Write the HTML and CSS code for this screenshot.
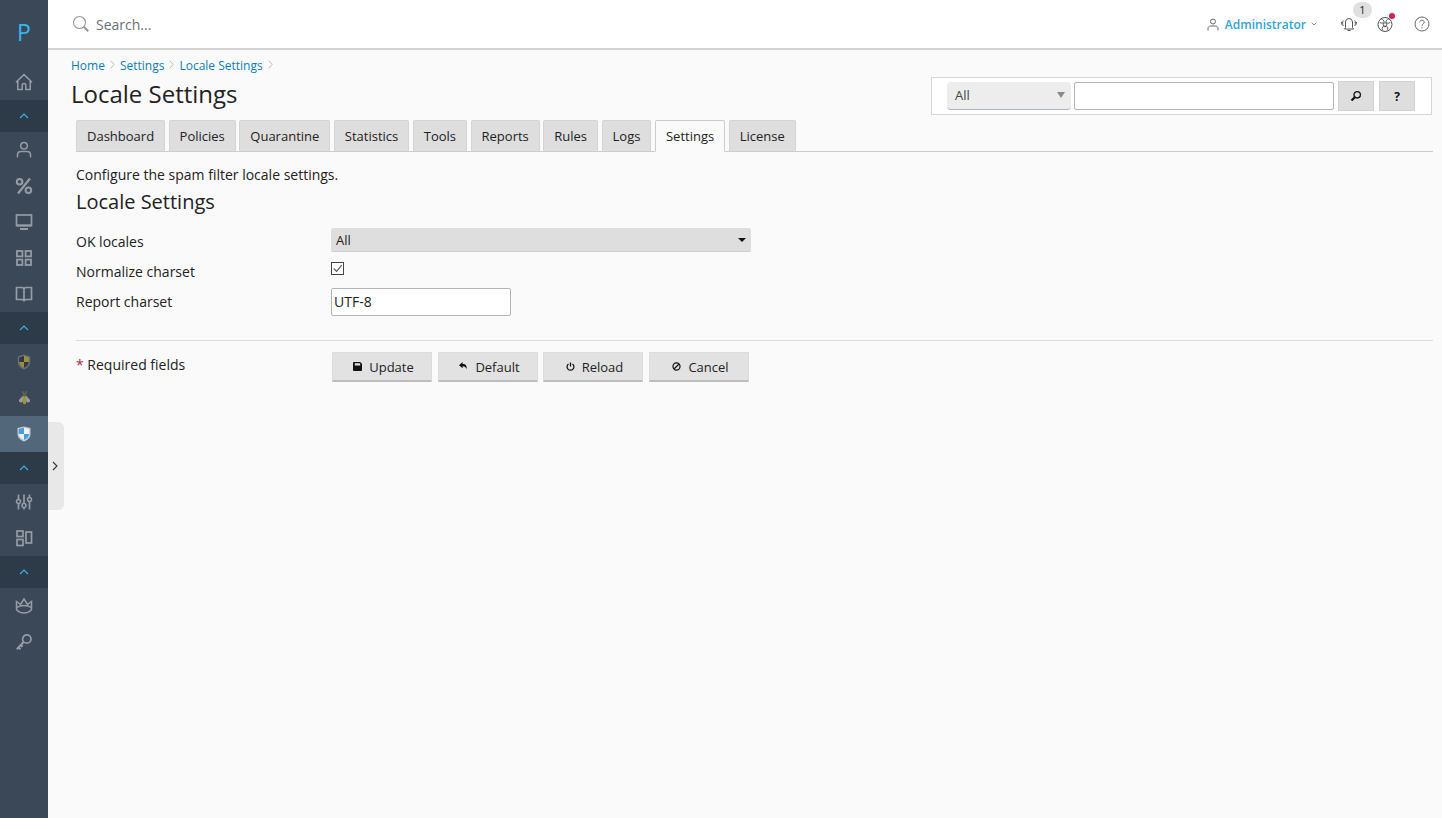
FILE: index.html
```html
<!DOCTYPE html>
<html lang="en">
<head>
<meta charset="utf-8">
<title>Locale Settings</title>
<link rel="stylesheet" href="styles.css">
</head>
<body>
<div class="app">
  <nav class="sidebar">
    <div class="logo">P</div>
    <div class="nav-item"><svg class="ico" viewBox="0 0 18 18"><path d="M1 9.200 9 1.600l8 7.600M2.800 8v8.600h4.400v-4.400a1.800 1.800 0 0 1 3.600 0v4.400h4.400V8"/></svg></div>
    <div class="band"><svg class="chev" viewBox="0 0 10 6"><path d="M1 5l4-4 4 4"/></svg></div>
    <div class="nav-item"><svg class="ico" viewBox="0 0 18 18"><circle cx="9" cy="4.800" r="3.300"/><path d="M2.500 16.500v-2.600c0-2 1.400-3.400 3.400-3.400h6.200c2 0 3.400 1.400 3.400 3.400v2.600"/></svg></div>
    <div class="nav-item"><svg class="ico" viewBox="0 0 18 18"><circle cx="4.600" cy="4.800" r="2.800" stroke-width="2"/><circle cx="13.400" cy="13.200" r="2.800" stroke-width="2"/><path d="M15 1.500 3 16.500" stroke-width="2.200"/></svg></div>
    <div class="nav-item"><svg class="ico" viewBox="0 0 18 18"><rect x="1.500" y="2" width="15" height="10.500" stroke-width="1.700"/><path d="M5 16h8" stroke-width="2"/><path d="M1.500 12.500h15" stroke-width="2"/></svg></div>
    <div class="nav-item"><svg class="ico" viewBox="0 0 18 18"><rect x="2" y="2" width="5.400" height="5.400" stroke-width="1.800"/><rect x="10.600" y="2" width="5.400" height="5.400" stroke-width="1.800"/><rect x="2" y="10.600" width="5.400" height="5.400" stroke-width="1.800"/><rect x="10.600" y="10.600" width="5.400" height="5.400" stroke-width="1.800"/></svg></div>
    <div class="nav-item"><svg class="ico" viewBox="0 0 18 18"><path d="M1.500 2.500h6L9 3.600l1.500-1.100h6v12h-6L9 15.600l-1.500-1.100h-6zM9 3.600v12" stroke-width="1.700"/></svg></div>
    <div class="band"><svg class="chev" viewBox="0 0 10 6"><path d="M1 5l4-4 4 4"/></svg></div>
    <div class="nav-item"><svg class="pic" viewBox="0 0 14 16"><path d="M7 .500l6.200 2V8c0 3.500-2.600 6-6.200 7.500C3.400 14 .800 11.500.800 8V2.500z" fill="#667079"/><path d="M7 2 2.200 3.500V8H7z" fill="#34383d"/><path d="M7 2l4.800 1.500V8H7z" fill="#9c9039"/><path d="M7 8H2.200c.3 2.600 2.200 4.500 4.800 5.800z" fill="#9c9039"/><path d="M7 8h4.800c-.3 2.600-2.200 4.500-4.800 5.800z" fill="#34383d"/></svg></div>
    <div class="nav-item"><svg class="pic bee" viewBox="0 0 13 14"><path d="M5.500 4 1 9c-.6 2 1.800 3 3.300 2L6 7z" fill="#97a0aa"/><path d="M7.500 4 12 9c.6 2-1.800 3-3.300 2L7 7z" fill="#97a0aa"/><ellipse cx="6.500" cy="9" rx="2" ry="4.200" fill="#9c9340"/><circle cx="6.500" cy="3.800" r="1.700" fill="#5f6440"/><path d="M5.500 2.500 4.500.3M7.500 2.500 8.500.3" stroke="#8d8a4e" stroke-width=".8"/></svg></div>
    <div class="nav-item active"><svg class="pic" viewBox="0 0 14 16"><path d="M7 .500l6.500 1.500V8c0 3.500-2.800 6-6.500 7.500C3.300 14 .500 11.500.500 8V2z" fill="#c3c9cf"/><path d="M7 1.800 1.800 3v5H7z" fill="#3f9fe0"/><path d="M7 1.800l5.200 1.200v5H7z" fill="#eef2f5"/><path d="M7 8H1.800c.3 2.600 2.400 4.500 5.200 5.800z" fill="#eef2f5"/><path d="M7 8h5.200c-.3 2.600-2.400 4.500-5.200 5.800z" fill="#3f9fe0"/></svg></div>
    <div class="band"><svg class="chev" viewBox="0 0 10 6"><path d="M1 5l4-4 4 4"/></svg></div>
    <div class="nav-item"><svg class="ico" viewBox="0 0 18 18"><path d="M3.500 1.500v5M3.500 10.500v6M9 1.500v9M9 14.500v2M14.500 1.500v3M14.500 8.500v8" stroke-width="1.700"/><circle cx="3.500" cy="8.500" r="2"/><circle cx="9" cy="12.500" r="2"/><circle cx="14.500" cy="6.500" r="2"/></svg></div>
    <div class="nav-item"><svg class="ico" viewBox="0 0 18 18"><rect x="2" y="2" width="6" height="5.500" stroke-width="1.700"/><rect x="2" y="10.500" width="6" height="6" stroke-width="1.700"/><rect x="11" y="3" width="5.500" height="11" stroke-width="1.700"/></svg></div>
    <div class="band"><svg class="chev" viewBox="0 0 10 6"><path d="M1 5l4-4 4 4"/></svg></div>
    <div class="nav-item"><svg class="ico" viewBox="0 0 18 18"><path d="M1.500 4.500 5.500 7.500 9 2l3.500 5.500 4-3V12.500c-1.500 2-4.300 3.500-7.500 3.500s-6-1.500-7.500-3.500z"/><path d="M1.800 10.500c1.700-1.200 4.200-2 7.200-2s5.500.8 7.200 2"/></svg></div>
    <div class="nav-item"><svg class="ico" viewBox="0 0 18 18"><circle cx="11.800" cy="6" r="4.200" stroke-width="1.700"/><path d="M8.600 9 1.800 16.200M3.500 14.400l2 2M5.800 12l1.800 1.800" stroke-width="2"/></svg></div>
  </nav>
  <div class="collapse-tab"><svg viewBox="0 0 6 10"><path d="M1 1l4 4-4 4"/></svg></div>
  <div class="main">
    <header class="topbar">
      <svg class="search-ico" viewBox="0 0 18 18"><circle cx="7.500" cy="7.500" r="6"/><path d="M11.800 11.800l4.500 4.500" stroke-width="2"/></svg>
      <span class="search-text">Search...</span>
      <div class="top-right">
        <div class="user">
          <svg class="user-ico" viewBox="0 0 12 13"><circle cx="6" cy="3.500" r="2.500"/><path d="M1 12.500v-2c0-1.500 1-2.500 2.500-2.500h5C10 8 11 9 11 10.500v2"/></svg>
          <span class="user-name">Administrator</span>
          <svg class="user-caret" viewBox="0 0 6 4"><path d="M.7.700 3 3 5.300.700"/></svg>
        </div>
        <div class="bell">
          <svg class="bell-ico" viewBox="0 0 16 14"><path d="M4.500 10.500V5a3.500 3.500 0 0 1 7 0v5.500l1 1.500h-9zM6.500 13.500h3"/><path d="M2.200 3.500C1.400 5 1.400 7.500 2.200 9M13.800 3.500c.8 1.500.8 4 0 5.500M.6 5c-.3.800-.3 1.700 0 2.500M15.400 5c.3.800.3 1.700 0 2.500"/></svg>
          <span class="count">1</span>
        </div>
        <div class="lifering">
          <svg class="ring-ico" viewBox="0 0 16 16"><circle cx="8" cy="8.500" r="7"/><circle cx="8" cy="8.500" r="1.800"/><path d="M3.500 3.200c1.500-.6 2.500.2 3.500 2 .2.800-.5 1.300-1.200 1.800-1.400.5-2.500 0-3-1M12.500 3.200c-1.500-.6-2.500.2-3.500 2-.2.800.5 1.300 1.200 1.800 1.400.5 2.500 0 3-1M5.500 11c.8-.5 1.500-.5 2.500-.3 1-.2 1.700-.2 2.500.3.500 1.200.3 2.500-.3 3.500M5.500 11c-.5 1.200-.3 2.500.3 3.500"/></svg>
          <span class="dot"></span>
        </div>
        <svg class="help" viewBox="0 0 16 16"><circle cx="8" cy="8" r="7"/><path d="M5.800 6.200C5.800 3.500 10.200 3.500 10.200 6.200c0 1.800-2.200 1.800-2.200 3.600M8 11.200v1.200"/></svg>
      </div>
    </header>
    <main class="content">
      <div class="page-head">
        <div class="head-left">
          <div class="crumbs">
            <a>Home</a><svg class="sep" viewBox="0 0 5 9"><path d="M.7.700 4.200 4.500.7 8.300"/></svg>
            <a>Settings</a><svg class="sep" viewBox="0 0 5 9"><path d="M.7.700 4.200 4.500.7 8.300"/></svg>
            <a>Locale Settings</a><svg class="sep" viewBox="0 0 5 9"><path d="M.7.700 4.200 4.500.7 8.300"/></svg>
          </div>
          <h1>Locale Settings</h1>
        </div>
        <div class="search-panel">
          <div class="scope"><span>All</span><i class="scope-arrow"></i></div>
          <input class="panel-input" type="text" aria-label="Search">
          <div class="panel-btn first"><svg viewBox="0 0 12 12"><circle cx="7.200" cy="4.800" r="3.200"/><path d="M4.800 7.200 1.500 10.500" stroke-width="2.200"/></svg></div>
          <div class="panel-btn">?</div>
        </div>
      </div>
      <div class="tabs">
        <div class="tab">Dashboard</div>
        <div class="tab">Policies</div>
        <div class="tab">Quarantine</div>
        <div class="tab">Statistics</div>
        <div class="tab">Tools</div>
        <div class="tab">Reports</div>
        <div class="tab">Rules</div>
        <div class="tab">Logs</div>
        <div class="tab current">Settings</div>
        <div class="tab">License</div>
      </div>
      <div class="body">
        <p class="intro">Configure the spam filter locale settings.</p>
        <h2>Locale Settings</h2>
        <div class="form-row r1">
          <label>OK locales</label>
          <div class="select"><span>All</span><i class="select-arrow"></i></div>
        </div>
        <div class="form-row r2">
          <label>Normalize charset</label>
          <span class="check"><svg viewBox="0 0 13 13"><path d="M2 6.500 5.500 10 11.500 2.500"/></svg></span>
        </div>
        <div class="form-row r3">
          <label>Report charset</label>
          <input class="text-input" type="text" value="UTF-8" aria-label="Report charset">
        </div>
        <hr>
        <div class="form-row r4">
          <label class="req-label"><b>*</b> Required fields</label>
          <div class="actions">
            <button class="btn" type="button"><svg viewBox="0 0 10 10"><path class="fill" d="M1 0h7l2 2v7a1 1 0 0 1-1 1H1a1 1 0 0 1-1-1V1a1 1 0 0 1 1-1zm1 1.500V4h6V1.500z"/></svg>Update</button>
            <button class="btn" type="button"><svg viewBox="0 0 10 10"><path class="fill" d="M4 0 0 3.500 4 7V4.800c2.500 0 3.800.8 4 3.200 1.500-3.500-.5-5.800-4-5.800z"/></svg>Default</button>
            <button class="btn" type="button"><svg viewBox="0 0 10 10"><path class="line" d="M5 .5v4.500M2.800 2.200a3.800 3.800 0 1 0 4.400 0"/></svg>Reload</button>
            <button class="btn" type="button"><svg viewBox="0 0 10 10"><circle class="line" cx="5" cy="5" r="3.900"/><path class="line" d="M2.500 7.500l5-5"/></svg>Cancel</button>
          </div>
        </div>
      </div>
    </main>
  </div>
</div>
</body>
</html>
```
FILE: styles.css
```css
* { box-sizing: border-box; }
html, body { margin: 0; height: 100%; }
body { font-family: "Open Sans", "Liberation Sans", sans-serif; font-size: 13px; color: #222; background: #fafafa; overflow: hidden; }
.app { display: flex; height: 818px; position: relative; }

.sidebar { width: 48px; flex: none; background: #3b4858; display: flex; flex-direction: column; }
.logo { height: 64px; display: flex; align-items: center; justify-content: center; color: #38b4f0; font-size: 23px; }
.nav-item { height: 36px; display: flex; align-items: center; justify-content: center; }
.nav-item.active { background: #53677b; }
.band { height: 32px; background: #2d3a48; display: flex; align-items: center; justify-content: center; }
.chev { width: 10px; height: 6px; fill: none; stroke: #38b4f0; stroke-width: 1.100; }
.ico { width: 18px; height: 18px; fill: none; stroke: #969ca5; stroke-width: 1.500; }
.pic { width: 14px; height: 16px; }
.pic.bee { width: 13px; height: 14px; }
.collapse-tab { position: absolute; left: 48px; top: 422px; width: 16px; height: 88px; background: #e8e8e8; border-radius: 0 6px 6px 0; display: flex; align-items: center; justify-content: center; padding-right: 2px; }
.collapse-tab svg { width: 6px; height: 10px; fill: none; stroke: #333; stroke-width: 1.100; }

.main { flex: 1; min-width: 0; display: flex; flex-direction: column; }
.topbar { height: 50px; background: #fff; border-bottom: 2px solid #d2d2d2; display: flex; align-items: center; padding: 0 12px 0 24px; }
.search-ico { width: 18px; height: 18px; fill: none; stroke: #999; stroke-width: 1.100; }
.search-text { margin-left: 6px; color: #6a7079; font-size: 14px; }
.top-right { margin-left: auto; display: flex; align-items: center; }
.user { display: flex; align-items: center; }
.user-ico { width: 12px; height: 13px; fill: none; stroke: #666; stroke-width: 1; }
.user-name { margin-left: 6px; color: #2ba6de; font-size: 12px; font-weight: 600; }
.user-caret { width: 6px; height: 4px; margin-left: 5px; fill: none; stroke: #777; stroke-width: .9; }
.bell { position: relative; margin-left: 24px; display: flex; }
.bell-ico { width: 16px; height: 14px; fill: none; stroke: #555; stroke-width: 1; }
.count { position: absolute; left: 12px; top: -15px; width: 19px; height: 16px; border-radius: 8px; background: #e0e0e0; text-align: center; font-size: 11px; line-height: 16px; color: #222; }
.lifering { position: relative; margin-left: 20px; display: flex; }
.ring-ico { width: 16px; height: 16px; fill: none; stroke: #555; stroke-width: 1; }
.dot { position: absolute; left: 12px; top: -3px; width: 6px; height: 6px; border-radius: 50%; background: #d6204e; }
.help { width: 16px; height: 16px; margin-left: 21px; fill: none; stroke: #666; stroke-width: 1; }

.content { flex: 1; padding: 0 9px 0 23px; }
.page-head { display: flex; justify-content: space-between; height: 70px; }
.head-left { padding-top: 7px; }
.crumbs { display: flex; align-items: center; height: 17px; font-size: 12px; }
.crumbs a { color: #0d7fb8; }
.sep { width: 5px; height: 9px; margin: -3px 5px 0 5px; fill: none; stroke: #b5b5b5; stroke-width: .9; }
h1 { margin: 3px 0 0; font-size: 24px; font-weight: 400; line-height: 33px; color: #222; }
.search-panel { margin: 27px 1px 0 0; width: 501px; height: 38px; background: #fff; border: 1px solid #d6d6d6; display: flex; align-items: flex-start; padding: 4px 0 0 15px; }
.scope { width: 124px; height: 28px; background: #ededed; border-radius: 4px; border-bottom: 1px solid #aab4c0; display: flex; align-items: center; justify-content: space-between; padding: 0 6px 1px 8px; color: #444; }
.scope-arrow { border: 4px solid transparent; border-top: 6px solid #8a8a8a; border-bottom: 0; }
.panel-input { width: 260px; height: 28px; margin-left: 3px; border: 1px solid #b4b4b4; border-radius: 2px; background: #fff; }
.panel-btn { width: 36px; height: 30px; margin: -1px 0 0 5px; background: #dedede; border: 1px solid #d2d2d2; display: flex; align-items: center; justify-content: center; font-weight: 700; font-size: 12px; color: #111; }
.panel-btn.first { margin-left: 4px; }
.panel-btn svg { width: 12px; height: 12px; fill: none; stroke: #111; stroke-width: 1.300; }

.tabs { display: flex; margin-left: 5px; height: 32px; border-bottom: 1px solid #ccc; gap: 3.500px; }
.tab { height: 32px; padding: 0 10px; background: #dedede; border: 1px solid #d4d4d4; border-bottom: 1px solid #ccc; border-radius: 2px 2px 0 0; display: flex; align-items: center; justify-content: center; color: #222; }
.tab.current { background: #fafafa; border-color: #ccc; border-bottom-color: #fafafa; }

.body { margin-left: 5px; }
.intro { margin: 13px 0 0; font-size: 14px; line-height: 19px; color: #222; }
h2 { margin: 4px 0 0; font-size: 20px; font-weight: 400; line-height: 27px; color: #222; }
.form-row { display: flex; align-items: center; }
.form-row label { width: 255px; flex: none; font-size: 14px; color: #222; }
.r1 { margin-top: 13px; height: 24px; }
.r2 { margin-top: 6px; height: 24px; }
.r3 { margin-top: 6px; height: 28px; }
.r4 { margin-top: 11px; height: 30px; align-items: flex-start; }
.r1 label, .r2 label { padding-top: 2px; }
.r3 label { padding-bottom: 2px; }
.req-label { padding-top: 3px; }
.req-label b { color: #b02a37; font-weight: 400; }
.select { width: 420px; height: 24px; background: #dedede; border-radius: 2px; border-bottom: 1px solid #cfcfcf; display: flex; align-items: center; justify-content: space-between; padding: 0 5px; color: #222; }
.select-arrow { border: 4px solid transparent; border-top: 4px solid #111; border-bottom: 0; }
.check { width: 13px; height: 13px; margin-top: -4px; border: 1px solid #444; background: #fff; display: block; }
.check svg { display: block; width: 11px; height: 11px; fill: none; stroke: #555; stroke-width: 1.300; }
.text-input { width: 180px; height: 28px; border: 1px solid #b4b4b4; border-radius: 2px; background: #fff; padding: 0 2px 2px; font: 14px "Open Sans", sans-serif; color: #222; }
hr { margin: 24px 0 0; border: 0; border-top: 1px solid #ddd; height: 0; }
.actions { display: flex; gap: 6px; margin-left: 1px; }
.btn { width: 100px; height: 30px; padding: 0 0 0 3px; background: #e2e2e2; border: 1px solid #dcdcdc; border-bottom: 2px solid #bdbdbd; border-radius: 1px; display: flex; align-items: center; justify-content: center; font: 13px "Open Sans", sans-serif; color: #222; }
.btn:nth-child(3) { margin-left: -1px; }
.btn svg { width: 9px; height: 9px; margin-right: 7px; }
.btn .fill { fill: #111; }
.btn .line { fill: none; stroke: #111; stroke-width: 1.400; }
```
